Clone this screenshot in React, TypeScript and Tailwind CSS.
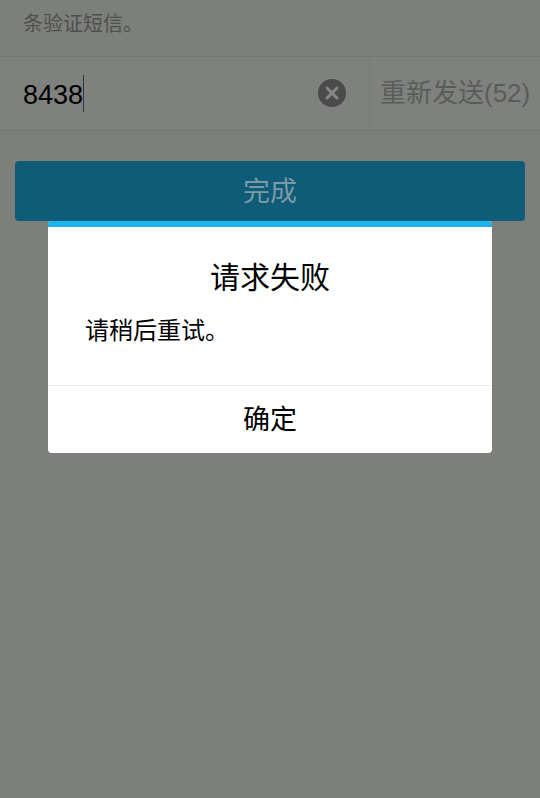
import React from 'react';

const cjk = "font-['Liberation_Sans','Noto_Sans_CJK_SC',sans-serif]";

export default function App() {
  return (
    <div className={`relative h-[798px] w-[540px] overflow-hidden bg-[#7d7f7b] ${cjk}`}>
      <div className="flex h-[57px] items-start border-b border-[#747672] px-[23px] pt-[11px] text-[20px] leading-[26px] text-[#4e504d]">
        条验证短信。
      </div>

      <div className="flex h-[74px] items-stretch border-b border-[#747672] bg-[#7f817e]">
        <div className="flex flex-1 items-center pl-[23px] pr-[23px]">
          <span className="pt-[2px] text-[27px] leading-[36px] text-black">8438</span>
          <span className="mb-[1px] h-[37px] w-px bg-[#2c3a40]" />
          <span className="mb-[1px] ml-auto flex h-[28px] w-[28px] items-center justify-center rounded-full bg-[#4a4b4a]">
            <svg width="16" height="16" viewBox="0 0 16 16" fill="none">
              <path d="M3 3L13 13M13 3L3 13" stroke="#868886" strokeWidth="3" strokeLinecap="round" />
            </svg>
          </span>
        </div>
        <div className="flex w-[171px] items-center border-l border-[#777976] pb-[1px] pl-[10px] text-[26px] leading-[32px] text-[#5a5c59]">
          重新发送(52)
        </div>
      </div>

      <div className="px-[15px] pt-[30px]">
        <div className="flex h-[60px] items-center justify-center rounded-[4px] bg-[#0f5c78] pt-[3px] text-[27px] text-[#7b9aa5]">
          完成
        </div>
      </div>

      <div className="absolute left-[48px] top-[221px] flex h-[232px] w-[444px] flex-col overflow-hidden rounded-[4px] bg-white">
        <div className="h-[6px] bg-[#1bb4ea]" />
        <div className="flex flex-1 flex-col border-b border-[#ececec]">
          <div className="pt-[32px] text-center text-[30px] leading-[38px] text-black">请求失败</div>
          <div className="px-[37px] pt-[19px] text-[24px] leading-[30px] text-black">请稍后重试。</div>
        </div>
        <div className="flex h-[67px] items-center justify-center pt-[2px] text-[27px] text-black">确定</div>
      </div>
    </div>
  );
}
